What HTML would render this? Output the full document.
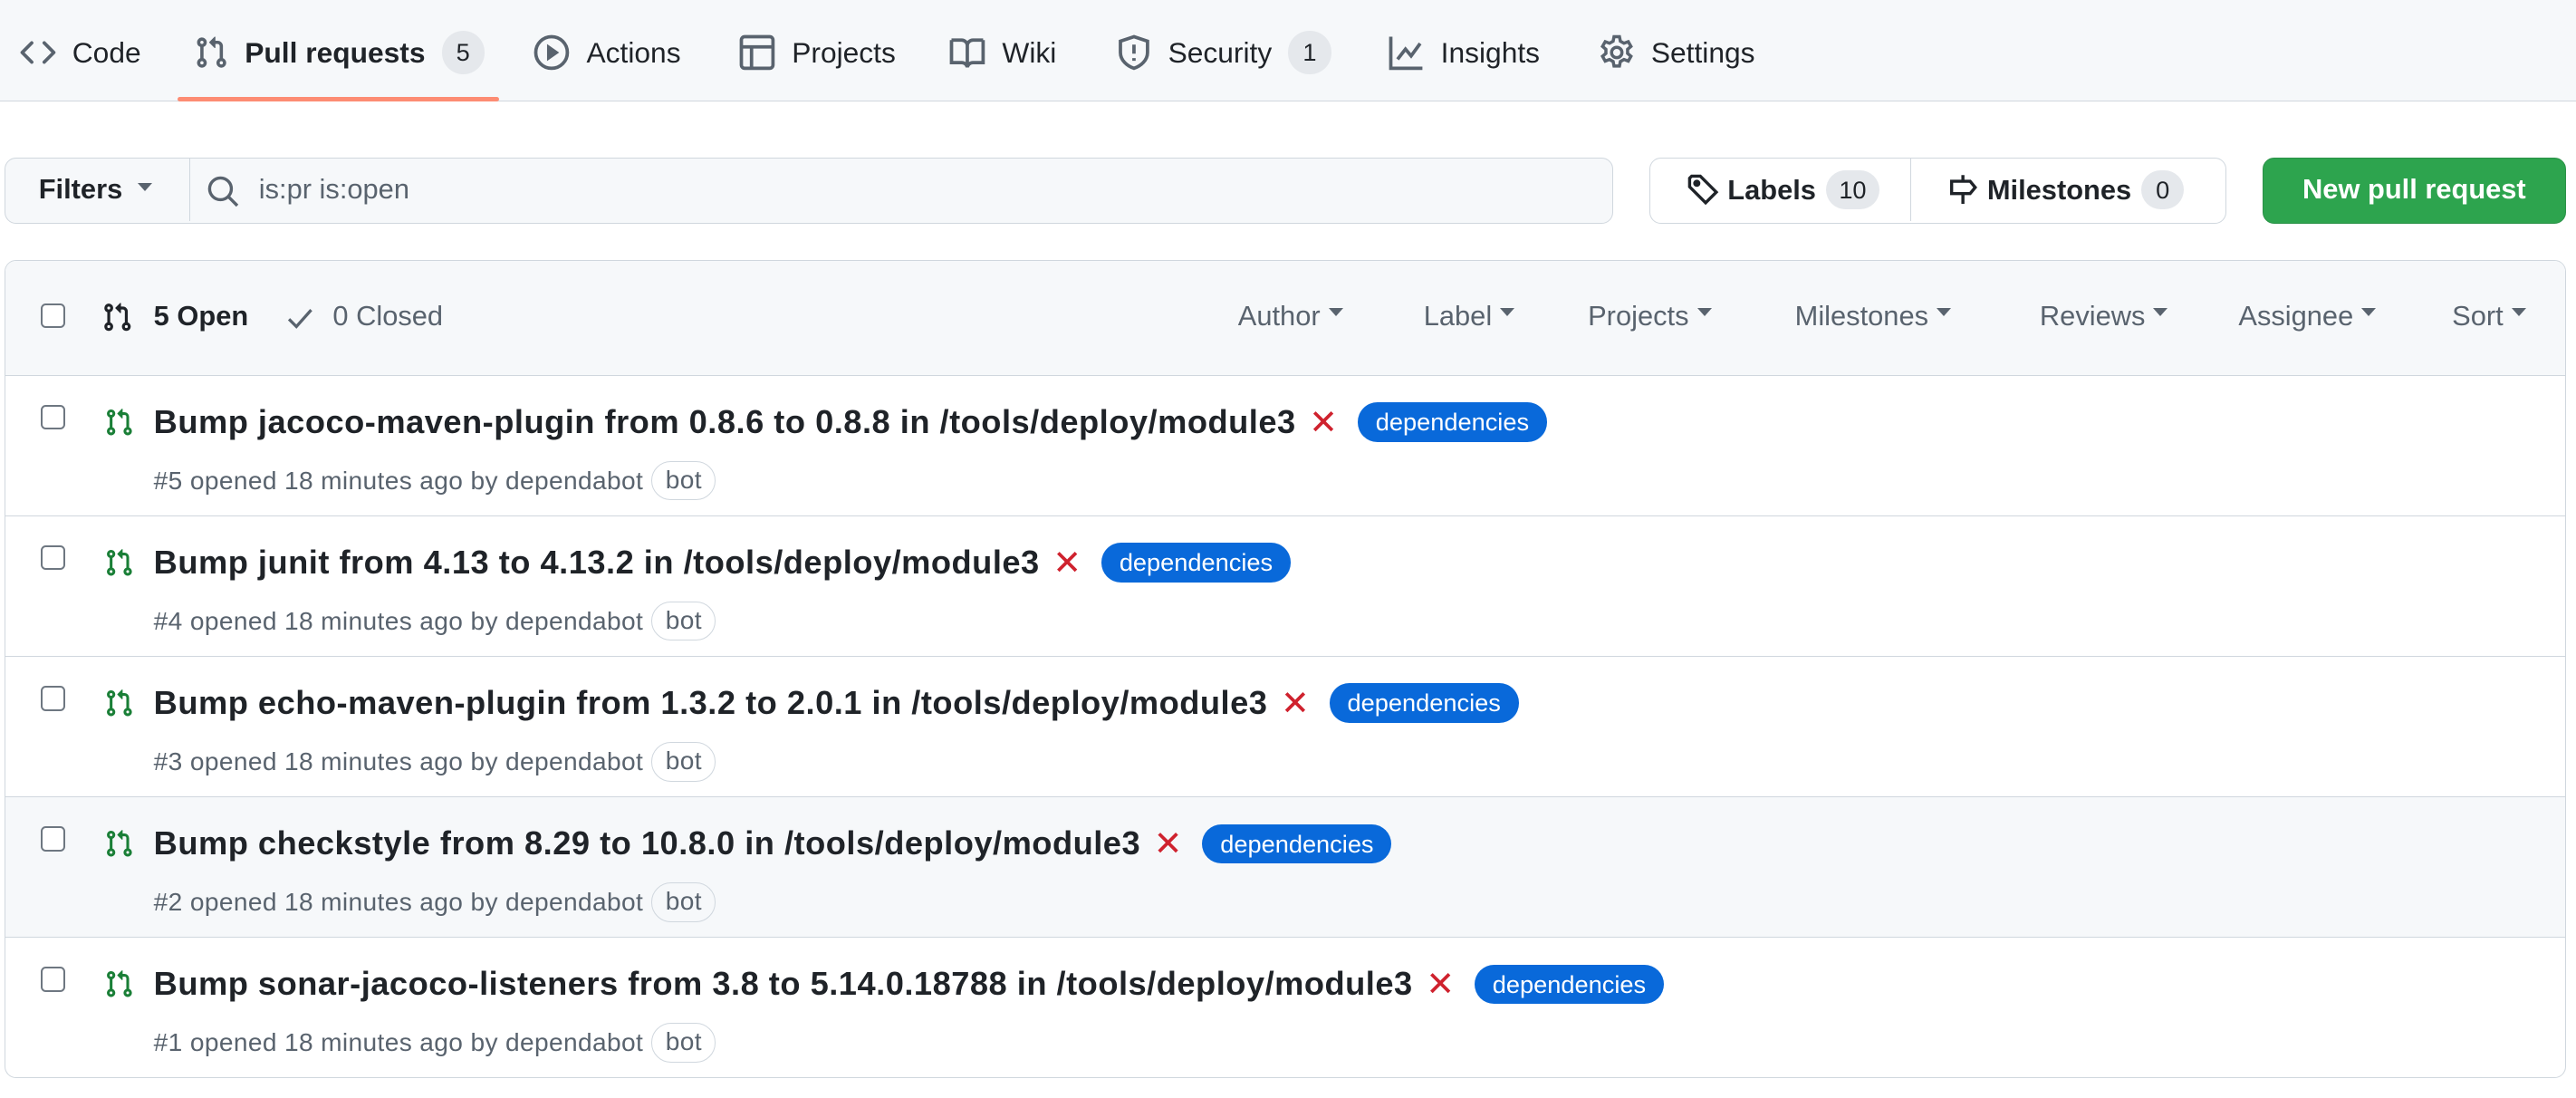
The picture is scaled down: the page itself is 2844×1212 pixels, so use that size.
<!DOCTYPE html>
<html><head><meta charset="utf-8"><style>
*{box-sizing:border-box;margin:0;padding:0}
html,body{width:2844px;height:1212px;overflow:hidden;background:#fff}
#w{width:1568px;height:668px;zoom:1.8138;position:relative;font-family:"Liberation Sans",sans-serif;color:#1f2328}
.a{position:absolute}
.nav{position:absolute;left:0;top:0;width:1568px;height:62px;background:#f6f8fa;border-bottom:1px solid #d0d7de}
.t{position:absolute;top:20px;font-size:17.5px;display:flex;align-items:center;height:24px;white-space:nowrap}
.t svg{margin-right:10px}
.cnt{display:inline-block;background:#e5e8ec;border-radius:13px;height:26px;min-width:26px;padding:0 8px;line-height:26px;font-size:15px;text-align:center;margin-left:10px}
.ico{fill:#59636e}
.box{position:absolute;left:3px;top:158px;width:1559px;height:498px;border:1px solid #d0d7de;border-radius:7px;overflow:hidden}
.hd{height:70px;background:#f6f8fa;border-bottom:1px solid #d0d7de;position:relative}
.cb{position:absolute;width:15px;height:15px;border:1.5px solid #6e7781;border-radius:3px;background:#fff}
.f{position:absolute;top:24px;font-size:17px;color:#59636e}
.f:after{content:"";display:inline-block;border:4.5px solid transparent;border-top:5px solid #59636e;margin-left:5px;vertical-align:1px}
.row{position:relative;height:85.5px;border-bottom:1px solid #d0d7de}
.row:last-child{border-bottom:0}
.ttl{position:absolute;left:90px;top:16px;font-size:20px;font-weight:bold;white-space:nowrap;display:flex;align-items:center;letter-spacing:0.27px}
.x{color:#cf222e;font-weight:normal;font-size:21px;margin-left:8px;letter-spacing:0}
.lb{background:#0969da;color:#fff;font-size:15px;font-weight:normal;border-radius:12px;height:24px;line-height:24px;padding:0 11px;margin-left:12px;letter-spacing:0}
.sub{position:absolute;left:90px;top:52px;font-size:15.5px;color:#59636e;white-space:nowrap;display:flex;align-items:center;letter-spacing:0.2px}
.bot{border:1px solid #d0d7de;border-radius:12px;height:24px;line-height:22px;padding:0 8px;margin-left:5px;color:#59636e;font-size:15.5px}
.pr{position:absolute;left:60px;top:19px}
</style></head><body><div id="w">
<div class="nav">
<div class="t" style="left:12px"><svg width="22" height="22" viewBox="0 0 16 16" class="ico"><path d="m11.28 3.22 4.25 4.25a.75.75 0 0 1 0 1.06l-4.250 4.25a.749.749 0 0 1-1.275-.326.749.749 0 0 1 .215-.734L13.940 8l-3.72-3.720a.749.749 0 0 1 .326-1.275.749.749 0 0 1 .734.215Zm-6.56 0a.751.751 0 0 1 1.042.018.751.751 0 0 1 .018 1.042L2.06 8l3.72 3.72a.749.749 0 0 1-.326 1.275.749.749 0 0 1-.734-.215L.47 8.53a.75.75 0 0 1 0-1.06Z"/></svg>Code</div>
<div class="t" style="left:118px;font-weight:bold"><svg width="21" height="21" viewBox="0 0 16 16" class="ico"><path d="M1.5 3.25a2.25 2.25 0 1 1 3 2.122v5.256a2.251 2.251 0 1 1-1.5 0V5.372A2.25 2.25 0 0 1 1.5 3.25Zm5.677-.177L9.573.677A.25.25 0 0 1 10 .854V2.5h1A2.5 2.5 0 0 1 13.5 5v5.628a2.251 2.251 0 1 1-1.5 0V5a1 1 0 0 0-1-1h-1v1.646a.25.25 0 0 1-.427.177L7.177 3.427a.25.25 0 0 1 0-.354ZM3.75 2.5a.75.75 0 1 0 0 1.5.75.75 0 0 0 0-1.5Zm0 9.5a.75.75 0 1 0 0 1.5.75.75 0 0 0 0-1.5Zm8.25.75a.75.75 0 1 0 1.5 0 .75.75 0 0 0-1.5 0Z"/></svg>Pull requests<span class="cnt" style="font-weight:normal">5</span></div>
<div class="a" style="left:108px;top:59px;width:196px;height:3px;background:#fd8c73;border-radius:2px"></div>
<div class="t" style="left:325px"><svg width="22" height="22" viewBox="0 0 16 16" fill="none" stroke="#59636e" stroke-width="1.5"><circle cx="8" cy="8" r="7"/><path d="M6.5 5.2v5.6L10.5 8z" fill="#59636e" stroke-width="1"/></svg>Actions</div>
<div class="t" style="left:450px"><svg width="22" height="22" viewBox="0 0 16 16" fill="none" stroke="#59636e" stroke-width="1.5"><rect x="1" y="1" width="14" height="14" rx="1.5"/><path d="M1 5.5h14M5.5 5.5V15"/></svg>Projects</div>
<div class="t" style="left:578px"><svg width="22" height="22" viewBox="0 0 16 16" fill="none" stroke="#59636e" stroke-width="1.5"><path d="M1 2.5h4.5A2.5 2.5 0 0 1 8 5v9.5M15 2.5h-4.5A2.5 2.5 0 0 0 8 5M1 2.5v10h4.5A2.5 2.5 0 0 1 8 14.5 2.5 2.5 0 0 1 10.5 12.5H15v-10"/></svg>Wiki</div>
<div class="t" style="left:679px"><svg width="22" height="22" viewBox="0 0 16 16" fill="none" stroke="#59636e" stroke-width="1.5"><path d="M8 1 2 3v5c0 3.5 3 6 6 7 3-1 6-3.5 6-7V3z"/><path d="M8 4.5v4M8 10.5v1.2"/></svg>Security<span class="cnt">1</span></div>
<div class="t" style="left:845px"><svg width="22" height="22" viewBox="0 0 16 16" fill="none" stroke="#59636e" stroke-width="1.5"><path d="M1 1v14h14M4 11l3.5-4.5 2.5 3L14 4"/></svg>Insights</div>
<div class="t" style="left:973px"><svg width="22" height="22" viewBox="0 0 16 16" fill="none" stroke="#59636e" stroke-width="1.4"><circle cx="8" cy="8" r="2.3"/><path d="M6.8 1h2.4l.4 2 1.6.9 1.9-.7 1.2 2.1-1.5 1.3v1.8l1.5 1.3-1.2 2.1-1.9-.7-1.6.9-.4 2H6.8l-.4-2-1.6-.9-1.9.7-1.2-2.1 1.5-1.3V6.6L1.7 5.3l1.2-2.1 1.9.7 1.6-.9z"/></svg>Settings</div>
</div>

<div class="a" style="left:3px;top:96px;width:979px;height:40px;border:1px solid #d0d7de;border-radius:7px;background:#f6f8fa;overflow:hidden">
<div class="a" style="left:0;top:0;width:112px;height:38px;border-right:1px solid #d0d7de;font-size:17px;font-weight:bold;line-height:38px;padding-left:20px">Filters<span style="display:inline-block;border:4.5px solid transparent;border-top:5px solid #59636e;margin-left:9px;vertical-align:0px"></span></div>
<svg class="a" style="left:122px;top:10px" width="20" height="20" viewBox="0 0 16 16" fill="none" stroke="#59636e" stroke-width="1.5"><circle cx="6.8" cy="6.8" r="5.3"/><path d="m10.6 10.6 4.4 4.4"/></svg>
<div class="a" style="left:154px;top:9px;font-size:17px;color:#59636e">is:pr is:open</div>
</div>

<div class="a" style="left:1004px;top:96px;width:351px;height:40px;border:1px solid #d0d7de;border-radius:7px;background:#fff">
<div class="a" style="left:158px;top:0;width:1px;height:38px;background:#d0d7de"></div>
<div class="t" style="left:22px;top:7px;font-weight:bold;font-size:17px"><svg width="20" height="20" viewBox="0 0 16 16" fill="none" stroke="#1f2328" stroke-width="1.5" style="margin-right:5px"><path d="M1.5 2.5v4.2l7.8 7.8 5.2-5.2-7.8-7.8H2.5z"/><circle cx="5" cy="5" r="1" fill="#1f2328"/></svg>Labels<span class="cnt" style="font-weight:normal;margin-left:6px;height:24px;line-height:24px">10</span></div>
<div class="t" style="left:180px;top:7px;font-weight:bold;font-size:17px"><svg width="20" height="20" viewBox="0 0 16 16" fill="none" stroke="#1f2328" stroke-width="1.5" style="margin-right:5px"><path d="M8 1v3M8 10v5M2.5 4h9l2.5 3-2.5 3h-9z"/></svg>Milestones<span class="cnt" style="font-weight:normal;margin-left:6px;height:24px;line-height:24px">0</span></div>
</div>

<div class="a" style="left:1377px;top:96px;width:185px;height:40px;border-radius:7px;background:#2da44e;border:1px solid #2a9147;color:#fff;font-size:17px;font-weight:bold;text-align:center;line-height:38px">New pull request</div>

<div class="box">
<div class="hd">
<div class="cb" style="left:21px;top:26px"></div>
<svg class="a" style="left:58px;top:25px" width="19" height="19" viewBox="0 0 16 16" fill="#1f2328"><path d="M1.5 3.25a2.25 2.25 0 1 1 3 2.122v5.256a2.251 2.251 0 1 1-1.5 0V5.372A2.25 2.25 0 0 1 1.5 3.25Zm5.677-.177L9.573.677A.25.25 0 0 1 10 .854V2.5h1A2.5 2.5 0 0 1 13.5 5v5.628a2.251 2.251 0 1 1-1.5 0V5a1 1 0 0 0-1-1h-1v1.646a.25.25 0 0 1-.427.177L7.177 3.427a.25.25 0 0 1 0-.354ZM3.75 2.5a.75.75 0 1 0 0 1.5.75.75 0 0 0 0-1.5Zm0 9.5a.75.75 0 1 0 0 1.5.75.75 0 0 0 0-1.5Zm8.25.75a.75.75 0 1 0 1.5 0 .75.75 0 0 0-1.5 0Z"/></svg>
<div class="a" style="left:90px;top:24px;font-size:17px;font-weight:bold">5 Open</div>
<svg class="a" style="left:170px;top:26px" width="18" height="18" viewBox="0 0 16 16" fill="none" stroke="#59636e" stroke-width="1.6"><path d="m2 8.5 4 4 8-9"/></svg>
<div class="a" style="left:199px;top:24px;font-size:17px;color:#59636e">0 Closed</div>
<div class="f" style="left:750px">Author</div>
<div class="f" style="left:863px">Label</div>
<div class="f" style="left:963px">Projects</div>
<div class="f" style="left:1089px">Milestones</div>
<div class="f" style="left:1238px">Reviews</div>
<div class="f" style="left:1359px">Assignee</div>
<div class="f" style="left:1489px">Sort</div>
</div>

<div class="row"><div class="cb" style="left:21px;top:18px"></div><svg class="pr" width="18" height="19" viewBox="0 0 16 16" fill="#1a7f37"><path d="M1.5 3.25a2.25 2.25 0 1 1 3 2.122v5.256a2.251 2.251 0 1 1-1.5 0V5.372A2.25 2.25 0 0 1 1.5 3.25Zm5.677-.177L9.573.677A.25.25 0 0 1 10 .854V2.5h1A2.5 2.5 0 0 1 13.5 5v5.628a2.251 2.251 0 1 1-1.5 0V5a1 1 0 0 0-1-1h-1v1.646a.25.25 0 0 1-.427.177L7.177 3.427a.25.25 0 0 1 0-.354ZM3.75 2.5a.75.75 0 1 0 0 1.5.75.75 0 0 0 0-1.5Zm0 9.5a.75.75 0 1 0 0 1.5.75.75 0 0 0 0-1.5Zm8.25.75a.75.75 0 1 0 1.5 0 .75.75 0 0 0-1.5 0Z"/></svg>
<div class="ttl">Bump jacoco-maven-plugin from 0.8.6 to 0.8.8 in /tools/deploy/module3<span class="x">✕</span><span class="lb">dependencies</span></div>
<div class="sub">#5 opened 18 minutes ago by dependabot<span class="bot">bot</span></div></div>

<div class="row"><div class="cb" style="left:21px;top:18px"></div><svg class="pr" width="18" height="19" viewBox="0 0 16 16" fill="#1a7f37"><path d="M1.5 3.25a2.25 2.25 0 1 1 3 2.122v5.256a2.251 2.251 0 1 1-1.5 0V5.372A2.25 2.25 0 0 1 1.5 3.25Zm5.677-.177L9.573.677A.25.25 0 0 1 10 .854V2.5h1A2.5 2.5 0 0 1 13.5 5v5.628a2.251 2.251 0 1 1-1.5 0V5a1 1 0 0 0-1-1h-1v1.646a.25.25 0 0 1-.427.177L7.177 3.427a.25.25 0 0 1 0-.354ZM3.75 2.5a.75.75 0 1 0 0 1.5.75.75 0 0 0 0-1.5Zm0 9.5a.75.75 0 1 0 0 1.5.75.75 0 0 0 0-1.5Zm8.25.75a.75.75 0 1 0 1.5 0 .75.75 0 0 0-1.5 0Z"/></svg>
<div class="ttl">Bump junit from 4.13 to 4.13.2 in /tools/deploy/module3<span class="x">✕</span><span class="lb">dependencies</span></div>
<div class="sub">#4 opened 18 minutes ago by dependabot<span class="bot">bot</span></div></div>

<div class="row"><div class="cb" style="left:21px;top:18px"></div><svg class="pr" width="18" height="19" viewBox="0 0 16 16" fill="#1a7f37"><path d="M1.5 3.25a2.25 2.25 0 1 1 3 2.122v5.256a2.251 2.251 0 1 1-1.5 0V5.372A2.25 2.25 0 0 1 1.5 3.25Zm5.677-.177L9.573.677A.25.25 0 0 1 10 .854V2.5h1A2.5 2.5 0 0 1 13.5 5v5.628a2.251 2.251 0 1 1-1.5 0V5a1 1 0 0 0-1-1h-1v1.646a.25.25 0 0 1-.427.177L7.177 3.427a.25.25 0 0 1 0-.354ZM3.75 2.5a.75.75 0 1 0 0 1.5.75.75 0 0 0 0-1.5Zm0 9.5a.75.75 0 1 0 0 1.5.75.75 0 0 0 0-1.5Zm8.25.75a.75.75 0 1 0 1.5 0 .75.75 0 0 0-1.5 0Z"/></svg>
<div class="ttl">Bump echo-maven-plugin from 1.3.2 to 2.0.1 in /tools/deploy/module3<span class="x">✕</span><span class="lb">dependencies</span></div>
<div class="sub">#3 opened 18 minutes ago by dependabot<span class="bot">bot</span></div></div>

<div class="row" style="background:#f6f8fa"><div class="cb" style="left:21px;top:18px"></div><svg class="pr" width="18" height="19" viewBox="0 0 16 16" fill="#1a7f37"><path d="M1.5 3.25a2.25 2.25 0 1 1 3 2.122v5.256a2.251 2.251 0 1 1-1.5 0V5.372A2.25 2.25 0 0 1 1.5 3.25Zm5.677-.177L9.573.677A.25.25 0 0 1 10 .854V2.5h1A2.5 2.5 0 0 1 13.5 5v5.628a2.251 2.251 0 1 1-1.5 0V5a1 1 0 0 0-1-1h-1v1.646a.25.25 0 0 1-.427.177L7.177 3.427a.25.25 0 0 1 0-.354ZM3.75 2.5a.75.75 0 1 0 0 1.5.75.75 0 0 0 0-1.5Zm0 9.5a.75.75 0 1 0 0 1.5.75.75 0 0 0 0-1.5Zm8.25.75a.75.75 0 1 0 1.5 0 .75.75 0 0 0-1.5 0Z"/></svg>
<div class="ttl">Bump checkstyle from 8.29 to 10.8.0 in /tools/deploy/module3<span class="x">✕</span><span class="lb">dependencies</span></div>
<div class="sub">#2 opened 18 minutes ago by dependabot<span class="bot">bot</span></div></div>

<div class="row"><div class="cb" style="left:21px;top:18px"></div><svg class="pr" width="18" height="19" viewBox="0 0 16 16" fill="#1a7f37"><path d="M1.5 3.25a2.25 2.25 0 1 1 3 2.122v5.256a2.251 2.251 0 1 1-1.5 0V5.372A2.25 2.25 0 0 1 1.5 3.25Zm5.677-.177L9.573.677A.25.25 0 0 1 10 .854V2.5h1A2.5 2.5 0 0 1 13.5 5v5.628a2.251 2.251 0 1 1-1.5 0V5a1 1 0 0 0-1-1h-1v1.646a.25.25 0 0 1-.427.177L7.177 3.427a.25.25 0 0 1 0-.354ZM3.75 2.5a.75.75 0 1 0 0 1.5.75.75 0 0 0 0-1.5Zm0 9.5a.75.75 0 1 0 0 1.5.75.75 0 0 0 0-1.5Zm8.25.75a.75.75 0 1 0 1.5 0 .75.75 0 0 0-1.5 0Z"/></svg>
<div class="ttl">Bump sonar-jacoco-listeners from 3.8 to 5.14.0.18788 in /tools/deploy/module3<span class="x">✕</span><span class="lb">dependencies</span></div>
<div class="sub">#1 opened 18 minutes ago by dependabot<span class="bot">bot</span></div></div>
</div>
</div></body></html>
